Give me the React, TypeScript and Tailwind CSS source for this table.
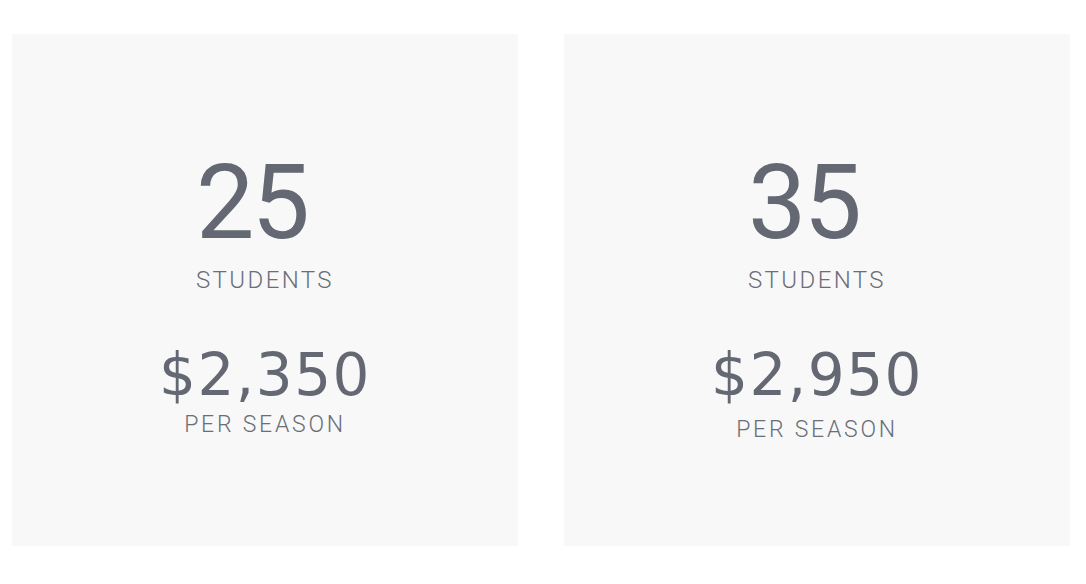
const plans = [
  { students: '25', price: '$2,350', gap: 'mt-[9px]' },
  { students: '35', price: '$2,950', gap: 'mt-[14px]' },
];

function PlanCard({ students, price, gap }: { students: string; price: string; gap: string }) {
  return (
    <div className="h-[512px] bg-[#f8f8f8] flex flex-col items-center pt-[117px] text-[#646873] font-['Roboto',sans-serif]">
      <div className="text-left">
        <div className="text-[104px] leading-none tracking-[-3px] font-normal">{students}</div>
        <div className="mt-[13px] text-[24px] leading-none tracking-[0.1em] font-light text-[#6a6e77]">STUDENTS</div>
      </div>
      <div className="mt-[54px] flex flex-col items-center">
        <div className="font-['DejaVu_Sans',sans-serif] text-[58px] leading-none tracking-[1.5px]">{price}</div>
        <div className={`${gap} text-[23px] leading-none tracking-[0.12em] font-light text-[#6a6e77]`}>PER SEASON</div>
      </div>
    </div>
  );
}

export default function App() {
  return (
    <div className="w-[1086px] h-[584px] bg-white pt-[34px] pl-3 pr-4">
      <div className="grid grid-cols-2 gap-[46px]">
        {plans.map((p) => (
          <PlanCard key={p.students} {...p} />
        ))}
      </div>
    </div>
  );
}
